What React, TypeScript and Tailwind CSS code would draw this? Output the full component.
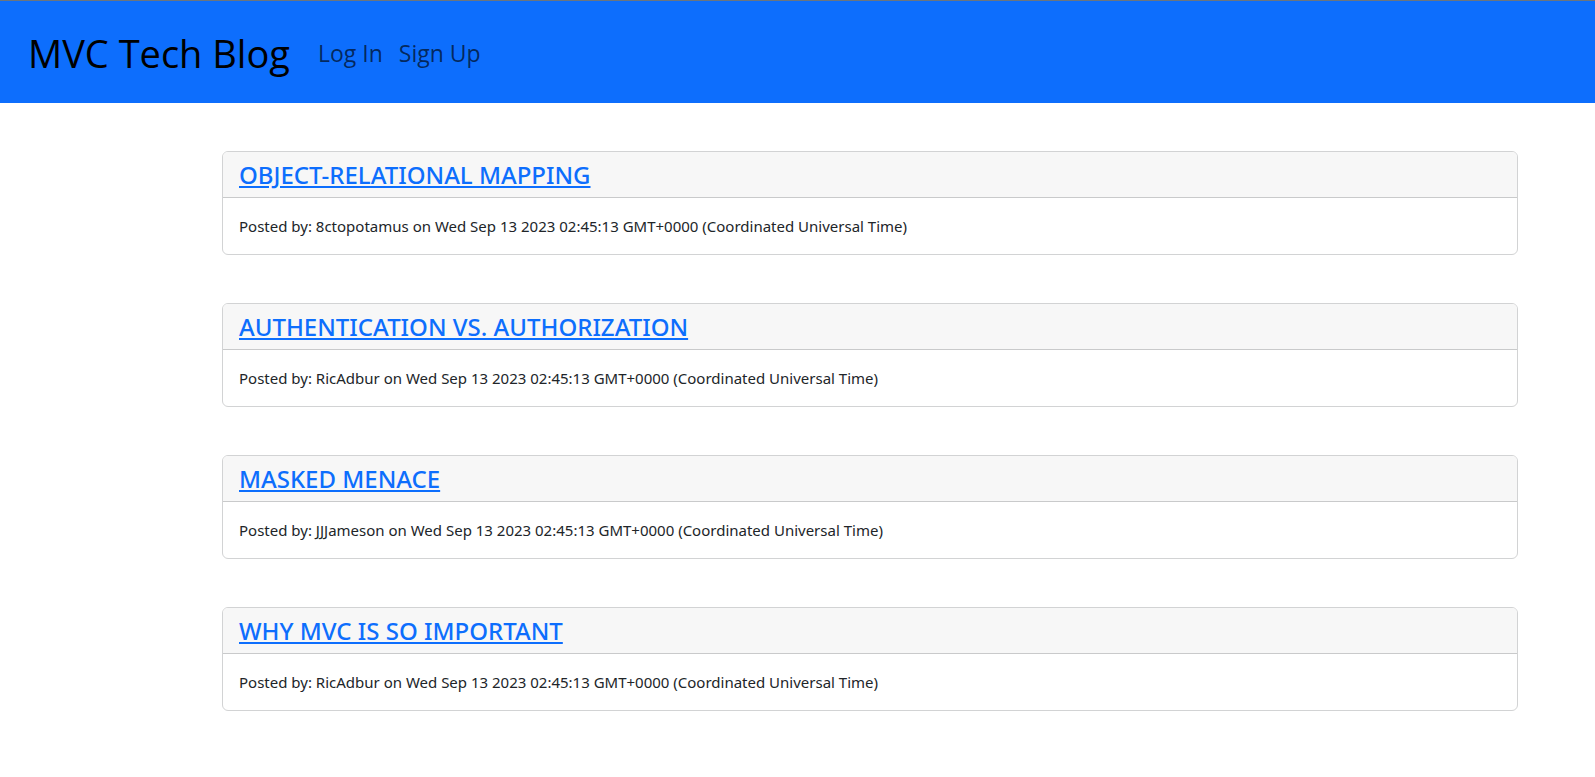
const posts = [
  { title: "OBJECT-RELATIONAL MAPPING", author: "8ctopotamus" },
  { title: "AUTHENTICATION VS. AUTHORIZATION", author: "RicAdbur" },
  { title: "MASKED MENACE", author: "JJJameson" },
  { title: "WHY MVC IS SO IMPORTANT", author: "RicAdbur" },
];

export default function App() {
  return (
    <div className="min-h-screen bg-white font-['Noto_Sans','Open_Sans',sans-serif] text-[#212529]">
      <header className="flex items-center border-t border-[#6c757d] bg-[#0d6efd] px-7 pt-[25px] pb-[23px] font-['Open_Sans','Noto_Sans',sans-serif]">
        <a href="#home" className="mr-7 text-[38px] leading-[54px] text-black">MVC Tech Blog</a>
        <nav className="flex gap-4 text-[23px] leading-9 text-black/65">
          <a href="#login">Log In</a>
          <a href="#signup">Sign Up</a>
        </nav>
      </header>
      <main className="mt-12 mr-[77px] ml-[222px] flex flex-col gap-12">
        {posts.map((post) => (
          <article key={post.title} className="overflow-hidden rounded-md border border-[#d2d3d4]">
            <h2 className="border-b border-[#c9cacb] bg-[#f7f7f7] px-4 py-2 text-2xl leading-[29px] font-medium">
              <a href="#post" className="text-[#0d6efd] underline">{post.title}</a>
            </h2>
            <p className="p-4 text-[15px] leading-6">
              Posted by: {post.author} on Wed Sep 13 2023 02:45:13 GMT+0000 (Coordinated Universal Time)
            </p>
          </article>
        ))}
      </main>
    </div>
  );
}
